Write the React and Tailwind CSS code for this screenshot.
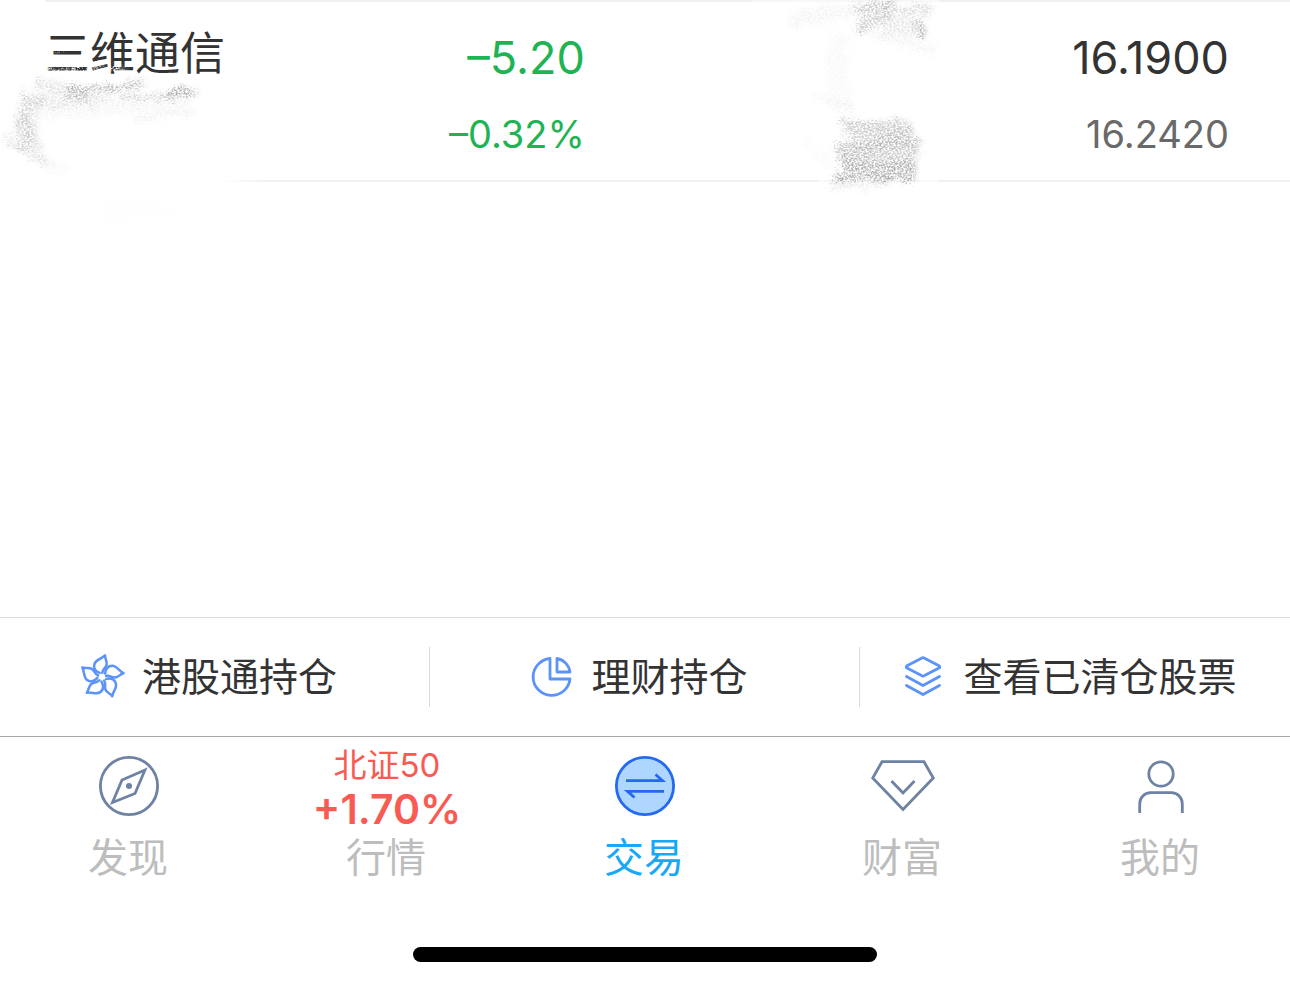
// Holdings page, bottom part: last position row, shortcuts and tab bar

const ICON_BLUE = "#5b93f7";
const ICON_SLATE = "#6e82a3";

function FlowerIcon() {
  return (
    <svg
      viewBox="-21 -21 42 42"
      className="w-11 h-11 shrink-0 overflow-visible"
      fill="none"
      stroke={ICON_BLUE}
      strokeWidth="2.4"
      strokeLinejoin="round"
      strokeLinecap="round"
      aria-hidden="true"
    >
      {[-3, 69, 141, 213, 285].map((angle) => (
        <g key={angle} transform={`rotate(${angle})`}>
          <path d="M-2 -4C-6 -6 -8 -9 -6.5 -13C-5 -17 0 -17 4 -20.5C3.500 -17 6 -15 5 -11.500C4 -8 1 -8 0.500 -4" />
        </g>
      ))}
    </svg>
  );
}

function PieIcon() {
  return (
    <svg
      viewBox="0 0 44 44"
      className="w-11 h-11 shrink-0"
      fill="none"
      stroke={ICON_BLUE}
      strokeWidth="2.8"
      strokeLinejoin="round"
      aria-hidden="true"
    >
      <path d="M21 3.5A18.500 18.500 0 1 0 41 24H21Z" />
      <path d="M28 3.5V17H41A16 16 0 0 0 28 3.5Z" />
    </svg>
  );
}

function LayersIcon() {
  return (
    <svg
      viewBox="0 0 44 44"
      className="w-11 h-11 shrink-0"
      fill="none"
      stroke={ICON_BLUE}
      strokeWidth="2.8"
      strokeLinejoin="round"
      strokeLinecap="round"
      aria-hidden="true"
    >
      <path d="M20.5 3.2Q22 2.2 23.5 3.2L38 10.8Q39.5 12 38 13L23.5 20.6Q22 21.6 20.5 20.6L6 13Q4.5 12 6 10.8Z" />
      <path d="M5.5 21.5L22 30.5L38.5 21.5" />
      <path d="M5.5 30.5L22 39.5L38.5 30.5" />
    </svg>
  );
}

function TabIcon({ children, color = ICON_SLATE }) {
  return (
    <svg
      viewBox="0 0 64 64"
      className="mt-2 w-16 h-16"
      fill="none"
      stroke={color}
      strokeWidth="2.8"
      aria-hidden="true"
    >
      {children}
    </svg>
  );
}

const SHORTCUTS = [
  { label: "港股通持仓", Icon: FlowerIcon },
  { label: "理财持仓", Icon: PieIcon },
  { label: "查看已清仓股票", Icon: LayersIcon },
];

const TABS = [
  {
    label: "发现",
    top: (
      <TabIcon>
        <circle cx="32" cy="32" r="28.6" />
        <path d="M48 16L25 26L15.5 48.5L38 39.5Z" />
        <circle cx="32" cy="32" r="3" fill={ICON_SLATE} stroke="none" />
      </TabIcon>
    ),
  },
  {
    label: "行情",
    top: (
      <span className="flex flex-col items-center text-[#f95b54]">
        <span className="text-[33px] leading-[38px]">北证50</span>
        <span className="text-[41px] leading-[50px] font-semibold">+1.70%</span>
      </span>
    ),
  },
  {
    label: "交易",
    active: true,
    top: (
      <TabIcon color="#2569f0">
        <circle cx="32" cy="32" r="28.6" fill="#aed6ff" />
        <path d="M13 26.7H49.500L42.500 20.5M51 37.300H14.500L21.500 43.5" />
      </TabIcon>
    ),
  },
  {
    label: "财富",
    top: (
      <TabIcon>
        <path d="M11 7.7H53L62.3 24L32 55.5L1.7 24Z" />
        <path d="M20.5 27L32 39L43.5 27" />
      </TabIcon>
    ),
  },
  {
    label: "我的",
    top: (
      <TabIcon>
        <circle cx="32" cy="20" r="12.2" />
        <path d="M10.7 59V50A11 11 0 0 1 21.7 38.7H42.3A11 11 0 0 1 53.3 50V59" />
      </TabIcon>
    ),
  },
];

// Pencil-like grain used for the scribbles that hide private values
function GrainFilter({ id, seed }) {
  return (
    <filter id={id} x="-10%" y="-10%" width="120%" height="120%">
      <feTurbulence
        type="fractalNoise"
        baseFrequency="0.5 0.6"
        numOctaves="3"
        seed={seed}
        result="noise"
      />
      <feTurbulence
        type="fractalNoise"
        baseFrequency="0.08"
        numOctaves="3"
        seed={seed}
        result="waves"
      />
      <feColorMatrix
        in="noise"
        type="matrix"
        values="0 0 0 0 0  0 0 0 0 0  0 0 0 0 0  3 0 0 0 -1"
        result="grain"
      />
      <feGaussianBlur in="SourceGraphic" stdDeviation="2" result="soft" />
      <feDisplacementMap
        in="soft"
        in2="waves"
        scale="14"
        xChannelSelector="R"
        yChannelSelector="G"
        result="bent"
      />
      <feDisplacementMap
        in="bent"
        in2="noise"
        scale="12"
        xChannelSelector="R"
        yChannelSelector="G"
        result="rough"
      />
      <feComposite in="rough" in2="grain" operator="in" />
    </filter>
  );
}

function NameScribble() {
  return (
    <svg
      viewBox="0 0 300 230"
      className="absolute left-0 top-0 w-[300px] h-[230px] pointer-events-none"
      fill="none"
      aria-hidden="true"
    >
      <defs>
        <GrainFilter id="grain-name" seed="4" />
        <linearGradient id="fade-name" x1="0" x2="1">
          <stop offset="0.8" stopColor="#fff" />
          <stop offset="1" stopColor="#fff" stopOpacity="0" />
        </linearGradient>
      </defs>
      <rect x="30" y="176" width="240" height="10" fill="url(#fade-name)" />
      <g filter="url(#grain-name)" stroke="#fff">
        <path d="M44 71H90M92 69L106 67M110 71H124" strokeWidth="7" />
        <path d="M44 71H90" strokeWidth="7" />
        <path d="M52 53H62" strokeWidth="3" />
      </g>
      <g filter="url(#grain-name)" stroke="#888">
        <path d="M67 87Q100 90 146 84" strokeWidth="7" opacity="0.6" />
        <path d="M167 95L198 91" strokeWidth="9" opacity="0.7" />
        <path d="M119 98L170 96" strokeWidth="4" opacity="0.45" />
        <path d="M36 82L90 97" strokeWidth="12" opacity="0.25" />
        <path d="M24 102L112 97" strokeWidth="15" opacity="0.18" />
        <path d="M66 96L90 95" strokeWidth="8" opacity="0.3" />
        <path d="M34 92Q22 118 32 150" strokeWidth="22" opacity="0.25" />
        <path d="M26 112L30 140" strokeWidth="12" opacity="0.25" />
        <path d="M6 140L50 162" strokeWidth="9" opacity="0.25" />
        <path d="M42 112L192 102" strokeWidth="16" opacity="0.08" />
        <path d="M135 120L196 112" strokeWidth="6" opacity="0.14" />
        <path d="M30 155L66 171" strokeWidth="12" opacity="0.05" />
        <path d="M105 212H175" strokeWidth="14" opacity="0.02" />
      </g>
    </svg>
  );
}

function AmountScribble() {
  return (
    <svg
      viewBox="0 0 240 200"
      className="absolute left-[740px] top-0 w-[240px] h-[200px] pointer-events-none"
      fill="none"
      aria-hidden="true"
    >
      <defs>
        <GrainFilter id="grain-amount" seed="9" />
      </defs>
      <rect x="78" y="178" width="120" height="6" fill="#fff" opacity="0.6" />
      <rect x="12" y="0" width="188" height="4" fill="#fff" opacity="0.5" />
      <g filter="url(#grain-amount)" stroke="#888">
        <path d="M50 20L150 4" strokeWidth="16" opacity="0.1" />
        <path d="M115 12L158 2" strokeWidth="11" opacity="0.4" />
        <path d="M118 28L150 14" strokeWidth="11" opacity="0.45" />
        <path d="M145 9L192 11" strokeWidth="7" opacity="0.35" />
        <path d="M145 25L180 27" strokeWidth="20" opacity="0.2" />
        <path d="M177 20L186 36" strokeWidth="8" opacity="0.6" />
        <path d="M130 34L196 50" strokeWidth="10" opacity="0.1" />
        <path d="M104 35Q88 58 106 112" strokeWidth="20" opacity="0.06" />
        <path d="M75 95L115 112" strokeWidth="5" opacity="0.12" />
        <path d="M102 126L172 129" strokeWidth="16" opacity="0.45" />
        <path d="M110 141L170 137" strokeWidth="12" opacity="0.3" />
        <path d="M98 154Q140 144 182 147" strokeWidth="16" opacity="0.5" />
        <path d="M105 159L178 158" strokeWidth="7" opacity="0.4" />
        <path d="M101 167L176 166" strokeWidth="10" opacity="0.7" />
        <path d="M95 178L176 176" strokeWidth="6" opacity="0.9" />
        <path d="M93 187L150 182" strokeWidth="6" opacity="0.2" />
        <path d="M65 142L98 169" strokeWidth="6" opacity="0.05" />
      </g>
    </svg>
  );
}

export default function App() {
  return (
    <div className="min-h-screen flex flex-col bg-white text-[#333] font-[Inter,'Noto_Sans_CJK_SC',sans-serif]">
      <main className="flex-1">
        {/* Position row */}
        <section className="relative pl-[45px]">
          <table className="w-full table-fixed border-y-2 border-[#f0f0f0]">
            <tbody>
              <tr className="align-top">
                <th
                  scope="row"
                  className="w-[22%] pt-[22px] text-left text-[45px] leading-[60px] font-normal whitespace-nowrap"
                >
                  三维通信
                </th>
                <td className="pt-[26px] pb-4 pr-2 text-right text-[#1eb453]">
                  <p className="text-[45px] leading-[60px]">–5.20</p>
                  <p className="mt-4 text-[38px] leading-[60px]">–0.32%</p>
                </td>
                <td className="w-[28%]" />
                <td className="w-[28%] pt-[26px] pb-4 pr-[61px] text-right">
                  <p className="text-[45px] leading-[60px]">16.1900</p>
                  <p className="mt-4 text-[38px] leading-[60px] text-[#696969]">
                    16.2420
                  </p>
                </td>
              </tr>
            </tbody>
          </table>
          <NameScribble />
          <AmountScribble />
        </section>
      </main>

      {/* Shortcuts */}
      <section className="grid grid-cols-3 py-[29px] border-t border-[#dcdcdc]">
        {SHORTCUTS.map(({ label, Icon }) => (
          <button
            key={label}
            type="button"
            className="h-[60px] pr-3 flex items-center justify-center gap-[18px] border-r border-[#dcdcdc] last:border-r-0 text-[39px] leading-[60px] whitespace-nowrap"
          >
            <Icon />
            {label}
          </button>
        ))}
      </section>

      {/* Tab bar */}
      <nav className="grid grid-cols-5 pt-[9px] border-t border-[#aaa]">
        {TABS.map(({ label, top, active }) => (
          <button
            key={label}
            type="button"
            aria-current={active ? "page" : undefined}
            className="flex flex-col items-center justify-end"
          >
            <span className="h-[88px] flex items-start">{top}</span>
            <span
              className={`pr-0.5 text-[40px] leading-[48px] ${
                active ? "text-[#18a8f6]" : "text-[#bdbdbd]"
              }`}
            >
              {label}
            </span>
          </button>
        ))}
      </nav>

      {/* Home indicator */}
      <div className="pt-[65px] pb-6 flex justify-center">
        <div className="w-[36%] h-[15px] rounded-full bg-black" />
      </div>
    </div>
  );
}
